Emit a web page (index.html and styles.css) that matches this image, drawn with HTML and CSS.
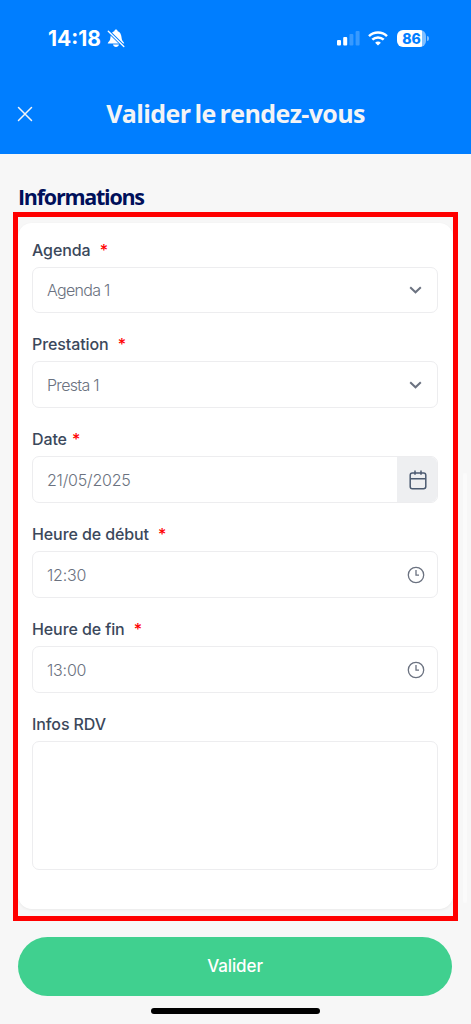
FILE: index.html
```html
<!DOCTYPE html>
<html lang="fr">

<head>
    <meta charset="UTF-8">
    <meta name="viewport" content="width=device-width, initial-scale=1.0">
    <title>Valider le rendez-vous</title>
    <link rel="stylesheet" href="styles.css">
</head>

<body>
    <header class="header">
        <div class="status-bar">
            <span class="time">14:18</span>
            <svg class="bell" width="18" height="19" viewBox="0 0 18 19">
                <path d="M.8 14.600c0-1.600 2.200-2 2.500-5C3.600 5.200 5 3 7.300 2.300 7.500 1.300 8.200.6 9 .6s1.500.7 1.700 1.700c2.300.7 3.700 2.900 4 7.300.3 3 2.500 3.400 2.500 5z" fill="#fff" />
                <path d="M6 15.600h6c-.3 1.500-1.500 2.300-3 2.300s-2.700-.8-3-2.300z" fill="#fff" />
                <path d="M1.300 2.200l15.500 15.200" stroke="#007eff" stroke-width="3.200" />
                <path d="M1.300 2.200l15.500 15.200" stroke="#fff" stroke-width="1.400" stroke-linecap="round" />
            </svg>
            <div class="status-icons">
                <svg class="signal" width="23" height="15" viewBox="0 0 23 15" fill="#fff">
                    <rect x="0" y="9" width="4" height="5.500" rx="1" />
                    <rect x="6.200" y="6" width="4" height="8.500" rx="1" />
                    <rect x="12.400" y="3" width="4" height="11.500" rx="1" opacity=".22" />
                    <rect x="18.600" y="0" width="4" height="14.500" rx="1" opacity=".22" />
                </svg>
                <svg class="wifi" width="20" height="15" viewBox="0 0 20 15" fill="none" stroke="#fff" stroke-width="2.500">
                    <path d="M1 5.200C6 .3 14 .3 19 5.200" />
                    <path d="M4.300 8.700c3.200-3.100 8.200-3.100 11.400 0" />
                    <path d="M10 14.600l-2.900-2.900c1.600-1.500 4.200-1.500 5.800 0z" fill="#fff" stroke="none" />
                </svg>
                <div class="battery"><span class="battery-level">86</span></div>
            </div>
        </div>
        <div class="title-bar">
            <button class="close" aria-label="Fermer">
                <svg width="16" height="16" viewBox="0 0 16 16" fill="none" stroke="#f3f4f6" stroke-width="1.500" stroke-linecap="round">
                    <path d="M1.500 1.500l13 13M14.500 1.500l-13 13" />
                </svg>
            </button>
            <h1 class="title">Valider le rendez-vous</h1>
        </div>
    </header>

    <main>
        <h2 class="section-title">Informations</h2>
        <div class="frame">
            <form class="card">
                <div class="field">
                    <div class="label">Agenda <span class="required">*</span></div>
                    <div class="input first">
                        <span class="option">Agenda 1</span>
                        <svg class="chevron" width="13" height="8" viewBox="0 0 13 8"><path d="M1.200 1.300l5.300 5 5.300-5" /></svg>
                    </div>
                </div>
                <div class="field">
                    <div class="label">Prestation <span class="required">*</span></div>
                    <div class="input">
                        <span class="option">Presta 1</span>
                        <svg class="chevron" width="13" height="8" viewBox="0 0 13 8"><path d="M1.200 1.300l5.300 5 5.300-5" /></svg>
                    </div>
                </div>
                <div class="field">
                    <div class="label">Date<span class="required">*</span></div>
                    <div class="input date">
                        <span>21/05/2025</span>
                        <div class="addon">
                            <svg width="18" height="20" viewBox="0 0 18 20" fill="none" stroke="#4b5a70" stroke-width="1.500">
                                <rect x="1.200" y="3" width="15.600" height="15.800" rx="2.200" />
                                <path d="M1.200 8.700h15.600M6 .5v4.200M12 .5v4.200" />
                            </svg>
                        </div>
                    </div>
                </div>
                <div class="field">
                    <div class="label">Heure de début <span class="required">*</span></div>
                    <div class="input">
                        <span>12:30</span>
                        <svg class="clock" width="18" height="18" viewBox="0 0 18 18"><circle cx="9" cy="9" r="7.700" /><path d="M9 4v5.200h3" /></svg>
                    </div>
                </div>
                <div class="field">
                    <div class="label">Heure de fin <span class="required">*</span></div>
                    <div class="input">
                        <span>13:00</span>
                        <svg class="clock" width="18" height="18" viewBox="0 0 18 18"><circle cx="9" cy="9" r="7.700" /><path d="M9 4v5.200h3" /></svg>
                    </div>
                </div>
                <div class="field">
                    <div class="label">Infos RDV</div>
                    <div class="input textarea"></div>
                </div>
            </form>
        </div>
        <button class="submit">Valider</button>
        <div class="home-indicator"></div>
    </main>
    <div class="scrollbar"></div>
</body>

</html>
```

FILE: styles.css
```css
* {
    box-sizing: border-box;
}

body {
    margin: 0;
    height: 1024px;
    position: relative;
    overflow: hidden;
    background-color: #f7f7f7;
    font-family: Inter, sans-serif;
}

.header {
    height: 154px;
    background-color: #007eff;
    color: #fff;
}

.status-bar {
    display: flex;
    align-items: center;
    height: 76px;
    padding: 0 45px 0 48px;
}

.time {
    width: 55px;
    font-size: 21px;
    font-weight: 700;
    white-space: nowrap;
}

.bell {
    margin-left: 4px;
}

.status-icons {
    display: flex;
    align-items: center;
    margin-left: auto;
}

.wifi {
    margin: 0 9px 0 8px;
}

.battery {
    position: relative;
    width: 29px;
    height: 17px;
    border-radius: 6px;
    background: linear-gradient(to right, #fff 25px, #80bfff 25px);
    color: #007eff;
    text-align: center;
}

.battery::after {
    content: "";
    position: absolute;
    top: 6px;
    right: -3px;
    width: 2px;
    height: 5px;
    border-radius: 0 2px 2px 0;
    background-color: #80bfff;
}

.battery-level {
    display: block;
    font-size: 14px;
    font-weight: 800;
    line-height: 17px;
}

.title-bar {
    display: grid;
    grid-template-columns: 50px 1fr 50px;
    align-items: center;
    height: 76px;
}

.close {
    display: flex;
    justify-content: center;
    padding: 0;
    border: none;
    background: none;
}

.title {
    margin: 0 0 3px;
    color: #f3f4f6;
    font-family: "Open Sans", sans-serif;
    font-size: 25px;
    font-weight: 700;
    letter-spacing: -0.6px;
    word-spacing: -2px;
    text-align: center;
    white-space: nowrap;
}

.section-title {
    height: 58px;
    margin: 0;
    padding: 28px 0 0 18px;
    color: #00105a;
    font-family: "Open Sans", sans-serif;
    font-size: 21.5px;
    font-weight: 700;
    line-height: 29px;
    letter-spacing: -1.25px;
}

.frame {
    width: 445px;
    height: 709px;
    margin-left: 13px;
    border: 5px solid #ff0000;
    padding-top: 6px;
}

.card {
    height: 686px;
    padding: 15px 15px 0 14px;
    border-radius: 14px;
    background-color: #fff;
    box-shadow: 0 1px 3px rgba(0, 0, 0, 0.06);
}

.field {
    margin-bottom: 19px;
}

.label {
    height: 24px;
    margin-bottom: 5px;
    color: #3b485b;
    font-size: 16px;
    font-weight: 500;
    line-height: 24px;
    letter-spacing: -0.1px;
}

.required {
    margin-left: 5px;
    color: #ff0000;
}

.input {
    display: flex;
    align-items: center;
    justify-content: space-between;
    height: 47px;
    padding: 0 15px 0 14px;
    border: 1px solid #ededef;
    border-radius: 7px;
    color: #6b7280;
    font-size: 16px;
    font-weight: 300;
    letter-spacing: -0.2px;
}

.input.first {
    height: 46px;
}

.option {
    letter-spacing: -0.7px;
}

.chevron {
    fill: none;
    stroke: #6b7280;
    stroke-width: 2;
}

.clock {
    margin-right: -3px;
    fill: none;
    stroke: #6b7280;
    stroke-width: 1.3;
}

.input.date {
    padding-right: 0;
    overflow: hidden;
}

.addon {
    display: flex;
    align-items: center;
    justify-content: center;
    width: 40px;
    height: 47px;
    padding-left: 2px;
    background-color: #eeeff1;
}

.input.textarea {
    height: 129px;
}

.submit {
    display: block;
    width: 434px;
    height: 59px;
    margin: 16px 0 0 18px;
    padding-bottom: 2px;
    border: none;
    border-radius: 30px;
    background-color: #40d08f;
    color: #fff;
    font-family: inherit;
    font-size: 17px;
    font-weight: 500;
    letter-spacing: -0.1px;
}

.home-indicator {
    width: 169px;
    height: 6px;
    margin: 12px 0 0 151px;
    border-radius: 3px;
    background-color: #000;
}

.scrollbar {
    position: absolute;
    top: 473px;
    right: 4px;
    width: 4px;
    height: 430px;
    border-radius: 2px;
    background-color: #fbfbfb;
}
```
